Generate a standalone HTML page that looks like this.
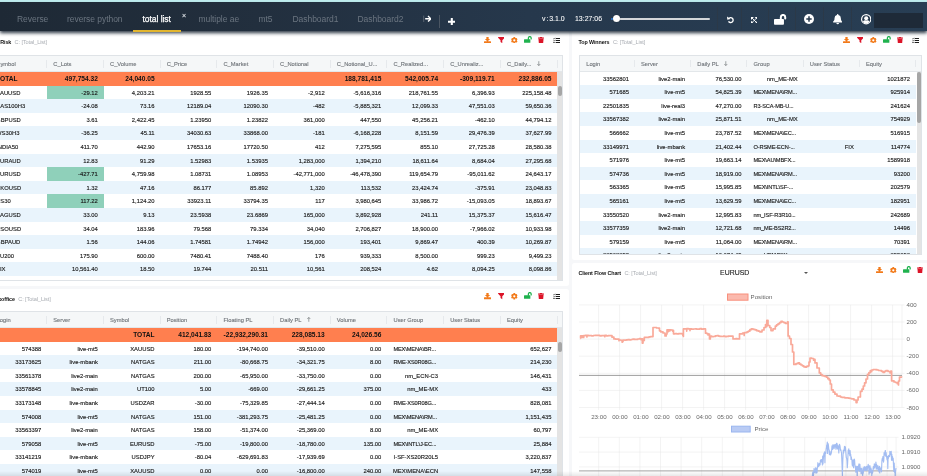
<!DOCTYPE html><html><head><meta charset="utf-8"><title>total list</title><style>
*{box-sizing:border-box}
html,body{margin:0;padding:0}
body{width:927px;height:476px;overflow:hidden;will-change:transform;background:#f6f7f9;font-family:"Liberation Sans",sans-serif;position:relative}
.topstrip{position:absolute;left:0;top:0;width:927px;height:1.55px;background:#bdebed}
.topdark{position:absolute;left:0;top:1.55px;width:927px;height:1.2px;background:#1c2734}
.nav{position:absolute;left:0;top:2px;width:927px;height:28.6px;background:linear-gradient(90deg,#1e2935 0%,#222f3e 28%,#26384c 57%,#283e54 100%);box-shadow:0 2.6px 3.4px rgba(30,42,56,.92);z-index:5}
.nav>*{position:absolute}
.tab{top:12px;font-size:8.5px;color:#6b7580;white-space:nowrap;line-height:10px;letter-spacing:-0.05px}
.tab.act{color:#fff;-webkit-text-stroke:0.25px #fff}
.uline{left:133px;top:27.8px;width:48px;height:2.2px;background:#e2b52e}
.tx{line-height:8px}
.nt{top:13.1px;font-size:6.95px;color:#fff;line-height:8px;white-space:nowrap;word-spacing:-1px;-webkit-text-stroke:0.06px #fff}
.panel{position:absolute;background:#fff;overflow:hidden;border-radius:2.5px}
.ttl{position:absolute;font-size:5.4px;line-height:7px;font-weight:bold;color:#111;white-space:nowrap;letter-spacing:-0.1px}
.ttl i{font-style:normal;font-weight:normal;color:#a9adb3;font-size:5.6px;margin-left:3.4px;letter-spacing:-0.1px}
.grid{position:absolute;border:1px solid #dfe3e7;background:#fff;overflow:hidden}
.hdr{position:absolute;top:0;height:15.7px;background:#f5f7f8;border-bottom:1px solid #e3e7ea}
.hc{position:absolute;top:0;height:15.7px;padding:0 5.8px 0 6.3px;font-size:5.75px;line-height:16.4px;color:#70757a;white-space:nowrap;-webkit-text-stroke:0.12px #70757a}
.hc:after{content:"";position:absolute;right:-0.3px;top:4px;height:7.6px;width:1px;background:#e6e9ec}
.arr{margin-left:5.6px;position:relative;top:-0.1px}
.row{position:absolute;height:13.6px;background:#fff}
.row.ev{background:#e9f4fc}
.row.tot{background:#ff7f4f;font-weight:bold}
.c{position:absolute;top:0;height:13.6px;padding:0 5.8px;font-size:5.85px;line-height:15.5px;color:#1a1a1a;text-align:right;white-space:nowrap;overflow:hidden;-webkit-text-stroke:0.14px #1a1a1a}
.tot .c{font-size:6.6px;color:#111;line-height:14.8px;-webkit-text-stroke:0}
.c.l{text-align:left}
.c.e{text-align:left;font-size:5.65px;letter-spacing:-0.12px;padding:0 0 0 6.2px}
.c.g{background:#8fd0ba}
.sb{position:absolute;background:#e4e4e4}
.sb b{position:absolute;left:0.8px;width:3.6px;border-radius:2px;background:#a6a6a6}
.ic{position:absolute;line-height:0}
.ic svg{display:block}
.botfade{position:absolute;left:0;top:471px;width:927px;height:5px;background:linear-gradient(rgba(0,0,0,0),rgba(0,0,0,.09));z-index:9}
</style></head><body>
<div class="topstrip"></div><div class="topdark"></div>
<div class="nav"><div class="tab" style="left:17.0px">Reverse</div>
<div class="tab" style="left:67.0px">reverse python</div>
<div class="tab act" style="left:142.5px">total list</div>
<div class="tab" style="left:198.5px">multiple ae</div>
<div class="tab" style="left:258.5px">mt5</div>
<div class="tab" style="left:292.5px">Dashboard1</div>
<div class="tab" style="left:357.5px">Dashboard2</div>
<div class="uline"></div>
<div class="tx" style="left:182px;top:9.5px;font-size:7px;font-weight:bold;color:#d8dde2">×</div>
<svg style="position:absolute;left:422.600px;top:13.300px" width="8.800" height="7.600" viewBox="0 0 8.800 7.600"><path d="M0.700 0.600v6.400" stroke="#6e7782" stroke-width="0.700" fill="none"/><path d="M2.200 3.800h5.400M5 1l2.900 2.800L5 6.600" stroke="#fff" stroke-width="1.350" fill="none" stroke-linejoin="round"/></svg>
<div style="position:absolute;left:439px;top:12.5px;width:0.6px;height:13px;background:#4b5663"></div>
<svg style="position:absolute;left:447.5px;top:15.7px" width="7.6" height="7.6" viewBox="0 0 8 8"><path d="M4 0.600v6.800M0.600 4h6.800" stroke="#fff" stroke-width="2.200" fill="none" stroke-linecap="round"/></svg>
<div class="nt" style="left:542px">v : 3.1.0</div>
<div class="nt" style="left:575px">13:27:06</div>
<div style="position:absolute;left:616px;top:15.85px;width:93.8px;height:2.2px;background:#d3d6d9;border-radius:1.1px"></div>
<div style="position:absolute;left:612.5px;top:13.45px;width:7px;height:7px;border-radius:50%;background:#fff;box-shadow:0 0 0.8px rgba(0,0,0,.5)"></div>
<div style="position:absolute;left:610.9px;top:15.85px;width:1.8px;height:2.2px;background:#2b7bd6;border-radius:1px"></div>
<div style="position:absolute;left:717px;top:5px;width:0.6px;height:23px;background:#2b3948"></div>
<div style="position:absolute;left:741px;top:5px;width:0.6px;height:23px;background:#2b3948"></div>
<div style="position:absolute;left:768px;top:5px;width:0.6px;height:23px;background:#2b3948"></div>
<div style="position:absolute;left:795px;top:5px;width:0.6px;height:23px;background:#2b3948"></div>
<div style="position:absolute;left:823px;top:5px;width:0.6px;height:23px;background:#2b3948"></div>
<div style="position:absolute;left:851px;top:5px;width:0.6px;height:23px;background:#2b3948"></div>
<svg style="position:absolute;left:726.5px;top:14px" width="7" height="7.5" viewBox="0 0 14 15"><path d="M3.2 5.2A5 5 0 1 1 3 10.8" fill="none" stroke="#fff" stroke-width="2.7"/><path d="M0 0.800l0.600 6.800 6.400-1.800z" fill="#fff"/></svg>
<svg style="position:absolute;left:750.8px;top:14.6px" width="6.6" height="6.6" viewBox="0 0 12 12"><path d="M2 2l8 8M10 2l-8 8" stroke="#fff" stroke-width="1.700"/><path d="M0 0h5.400L0 5.400zM12 0v5.400L6.600 0zM0 12V6.600L5.400 12zM12 12H6.600L12 6.600z" fill="#fff"/></svg>
<div style="position:absolute;left:774.1px;top:8.9px"><svg viewBox="0 0 18 15" width="12.8" height="10.7"><rect x="0" y="7" width="14" height="8" rx="1.200" fill="#fff"/><path d="M9.600 7.400V4.400a3.100 3.100 0 0 1 6.200 0V6.400" fill="none" stroke="#fff" stroke-width="2.800" stroke-linecap="round"/></svg></div>
<svg style="position:absolute;left:804px;top:12px" width="10" height="10" viewBox="0 0 20 20"><circle cx="10" cy="10" r="10" fill="#fff"/><path d="M10 4.6v10.8M4.6 10h10.8" stroke="#27394c" stroke-width="3"/></svg>
<svg style="position:absolute;left:832.6px;top:12px" width="9.4" height="10.6" viewBox="0 0 18 20"><path fill="#fff" d="M9 0a1.4 1.4 0 0 1 1.4 1.6A6 6 0 0 1 15 7.5c0 4.5 1.6 5.8 2.6 6.9a1 1 0 0 1-.8 1.7H1.200a1 1 0 0 1-.8-1.700C1.4 13.300 3 12 3 7.500A6 6 0 0 1 7.600 1.600 1.400 1.400 0 0 1 9 0zM6.500 17.200h5a2.500 2.500 0 0 1-5 0z"/></svg>
<svg style="position:absolute;left:861px;top:12.4px" width="10.4" height="10.4" viewBox="0 0 20 20"><circle cx="10" cy="10" r="10" fill="#fff"/><circle cx="10" cy="10" r="7.600" fill="#27394d"/><circle cx="10" cy="8" r="3.900" fill="#fff"/><path d="M3.6 14.500a7.400 7.400 0 0 0 12.800 0A6.500 6.500 0 0 0 10 12.300a6.500 6.500 0 0 0-6.400 2.200z" fill="#fff"/></svg>
<div style="position:absolute;left:874.2px;top:11px;width:48.6px;height:15.2px;background:#1e2a38"></div></div>
<div class="panel" style="left:-14px;top:31px;width:583px;height:255.4px">
<div class="ttl" style="left:14.2px;top:8px">Risk<i>C: [Total_List]</i></div>
<div class="ic" style="left:497.9px;top:6.1px"><svg viewBox="0 0 14 12.4" width="7" height="6.2"><path fill="#f27a1a" d="M4.700 0h4.600v4h3L7 8.900 1.700 4H4.700zM0.600 8.700h12.800a0.600 0.600 0 0 1 0.600 0.600v2.500a0.600 0.600 0 0 1-0.600 0.600H0.600a0.600 0.600 0 0 1-0.600-0.600V9.300a0.600 0.600 0 0 1 0.600-0.600z"/></svg></div><div class="ic" style="left:511.6px;top:6.1px"><svg viewBox="0 0 14 12.600" width="6.800" height="6.200"><path fill="#dc1428" d="M0.200 0h13.600v1.300L8.800 6.400V12.600L5.200 10.200V6.400L0.200 1.300z"/></svg></div><div class="ic" style="left:525.1px;top:5.8px"><svg viewBox="0 0 16 16" width="6.6" height="6.6"><g fill="#f27a1a"><circle cx="8" cy="8" r="6"/><rect x="5.800" y="0.200" width="4.400" height="15.600" rx="0.800"/><rect x="5.800" y="0.200" width="4.400" height="15.600" rx="0.800" transform="rotate(60 8 8)"/><rect x="5.800" y="0.200" width="4.400" height="15.600" rx="0.800" transform="rotate(120 8 8)"/></g><circle cx="8" cy="8" r="2.700" fill="#fff"/></svg></div><div class="ic" style="left:537.8px;top:5.2px"><svg viewBox="0 0 18 15" width="8.2" height="6.8"><rect x="0" y="7" width="14" height="8" rx="1.200" fill="#1fb24e"/><path d="M9.600 7.400V4.400a3.100 3.100 0 0 1 6.200 0V6.400" fill="none" stroke="#1fb24e" stroke-width="2.800" stroke-linecap="round"/></svg></div><div class="ic" style="left:552.3px;top:5.8px"><svg viewBox="0 0 14 15" width="6" height="6.4"><path fill="#dc1428" d="M4.600 0h4.800l0.800 1.200H14v2.200H0V1.200h3.800zM1 4.400h12l-0.900 9.400a1.300 1.300 0 0 1-1.300 1.200H3.200a1.300 1.300 0 0 1-1.300-1.200z"/></svg></div><div class="ic" style="left:566.8px;top:6.0px"><svg viewBox="0 0 7.4 6" width="7.4" height="6"><g fill="#1e1e1e"><rect x="2.600" y="0.950" width="4.800" height="1.100" rx="0.250"/><rect x="2.600" y="2.950" width="4.800" height="1.100" rx="0.250"/><rect x="2.600" y="4.950" width="4.800" height="1.100" rx="0.250"/><rect x="0.400" y="4.900" width="1.200" height="1.200"/></g><path d="M0.200 1.500l0.600 0.600L2 0.800M0.200 3.500l0.600 0.600L2 2.800" stroke="#1e1e1e" stroke-width="0.600" fill="none"/></svg></div>
<div class="grid" style="left:3.3px;top:24.4px;width:573.6px;height:225.4px">
<div class="hdr" style="left:0.0px;width:575.0px">
<div class="hc" style="left:0.0px;width:56.7px"><span>Symbol</span></div>
<div class="hc" style="left:56.7px;width:56.7px"><span>C_Lots</span></div>
<div class="hc" style="left:113.4px;width:56.7px"><span>C_Volume</span></div>
<div class="hc" style="left:170.1px;width:56.7px"><span>C_Price</span></div>
<div class="hc" style="left:226.8px;width:56.7px"><span>C_Market</span></div>
<div class="hc" style="left:283.5px;width:56.7px"><span>C_Notional</span></div>
<div class="hc" style="left:340.2px;width:56.7px"><span>C_Notional_U...</span></div>
<div class="hc" style="left:396.9px;width:56.7px"><span>C_Realized...</span></div>
<div class="hc" style="left:453.6px;width:56.7px"><span>C_Unrealiz...</span></div>
<div class="hc" style="left:510.3px;width:56.7px"><span>C_Daily...</span><svg class="arr" width="3.6" height="5" viewBox="0 0 3.6 5" role="img"><title>↓</title><path d="M1.800 0.200v4.300M0.300 3l1.500 1.600L3.300 3" stroke="#6d7276" stroke-width="0.650" fill="none"/></svg></div>
</div>
<div class="row tot" style="left:0.0px;top:15.7px;width:567.0px">
<div class="c l" style="left:0.0px;width:56.7px">TOTAL</div>
<div class="c" style="left:56.7px;width:56.7px">497,754.32</div>
<div class="c" style="left:113.4px;width:56.7px">24,040.05</div>
<div class="c" style="left:340.2px;width:56.7px">188,781,415</div>
<div class="c" style="left:396.9px;width:56.7px">542,005.74</div>
<div class="c" style="left:453.6px;width:56.7px">-309,119.71</div>
<div class="c" style="left:510.3px;width:56.7px">232,886.05</div>
</div>
<div class="row" style="left:0.0px;top:29.3px;width:567.0px">
<div class="c l" style="left:0.0px;width:56.7px">XAUUSD</div>
<div class="c g" style="left:56.7px;width:56.7px">-29.12</div>
<div class="c" style="left:113.4px;width:56.7px">4,203.21</div>
<div class="c" style="left:170.1px;width:56.7px">1928.55</div>
<div class="c" style="left:226.8px;width:56.7px">1926.35</div>
<div class="c" style="left:283.5px;width:56.7px">-2,912</div>
<div class="c" style="left:340.2px;width:56.7px">-5,616,316</div>
<div class="c" style="left:396.9px;width:56.7px">218,761.55</div>
<div class="c" style="left:453.6px;width:56.7px">6,396.93</div>
<div class="c" style="left:510.3px;width:56.7px">225,158.48</div>
</div>
<div class="row ev" style="left:0.0px;top:42.9px;width:567.0px">
<div class="c l" style="left:0.0px;width:56.7px">NAS100H3</div>
<div class="c" style="left:56.7px;width:56.7px">-24.08</div>
<div class="c" style="left:113.4px;width:56.7px">73.16</div>
<div class="c" style="left:170.1px;width:56.7px">12189.04</div>
<div class="c" style="left:226.8px;width:56.7px">12090.30</div>
<div class="c" style="left:283.5px;width:56.7px">-482</div>
<div class="c" style="left:340.2px;width:56.7px">-5,885,321</div>
<div class="c" style="left:396.9px;width:56.7px">12,099.33</div>
<div class="c" style="left:453.6px;width:56.7px">47,551.03</div>
<div class="c" style="left:510.3px;width:56.7px">59,650.36</div>
</div>
<div class="row" style="left:0.0px;top:56.5px;width:567.0px">
<div class="c l" style="left:0.0px;width:56.7px">GBPUSD</div>
<div class="c" style="left:56.7px;width:56.7px">3.61</div>
<div class="c" style="left:113.4px;width:56.7px">2,422.45</div>
<div class="c" style="left:170.1px;width:56.7px">1.23950</div>
<div class="c" style="left:226.8px;width:56.7px">1.23822</div>
<div class="c" style="left:283.5px;width:56.7px">361,000</div>
<div class="c" style="left:340.2px;width:56.7px">447,550</div>
<div class="c" style="left:396.9px;width:56.7px">45,256.21</div>
<div class="c" style="left:453.6px;width:56.7px">-462.10</div>
<div class="c" style="left:510.3px;width:56.7px">44,794.12</div>
</div>
<div class="row ev" style="left:0.0px;top:70.1px;width:567.0px">
<div class="c l" style="left:0.0px;width:56.7px">WS30H3</div>
<div class="c" style="left:56.7px;width:56.7px">-36.25</div>
<div class="c" style="left:113.4px;width:56.7px">45.11</div>
<div class="c" style="left:170.1px;width:56.7px">34030.63</div>
<div class="c" style="left:226.8px;width:56.7px">33868.00</div>
<div class="c" style="left:283.5px;width:56.7px">-181</div>
<div class="c" style="left:340.2px;width:56.7px">-6,168,228</div>
<div class="c" style="left:396.9px;width:56.7px">8,151.59</div>
<div class="c" style="left:453.6px;width:56.7px">29,476.39</div>
<div class="c" style="left:510.3px;width:56.7px">37,627.99</div>
</div>
<div class="row" style="left:0.0px;top:83.7px;width:567.0px">
<div class="c l" style="left:0.0px;width:56.7px">INDIA50</div>
<div class="c" style="left:56.7px;width:56.7px">411.70</div>
<div class="c" style="left:113.4px;width:56.7px">442.90</div>
<div class="c" style="left:170.1px;width:56.7px">17653.16</div>
<div class="c" style="left:226.8px;width:56.7px">17720.50</div>
<div class="c" style="left:283.5px;width:56.7px">412</div>
<div class="c" style="left:340.2px;width:56.7px">7,275,595</div>
<div class="c" style="left:396.9px;width:56.7px">855.10</div>
<div class="c" style="left:453.6px;width:56.7px">27,725.28</div>
<div class="c" style="left:510.3px;width:56.7px">28,580.38</div>
</div>
<div class="row ev" style="left:0.0px;top:97.3px;width:567.0px">
<div class="c l" style="left:0.0px;width:56.7px">EURAUD</div>
<div class="c" style="left:56.7px;width:56.7px">12.83</div>
<div class="c" style="left:113.4px;width:56.7px">91.29</div>
<div class="c" style="left:170.1px;width:56.7px">1.52983</div>
<div class="c" style="left:226.8px;width:56.7px">1.53935</div>
<div class="c" style="left:283.5px;width:56.7px">1,283,000</div>
<div class="c" style="left:340.2px;width:56.7px">1,394,210</div>
<div class="c" style="left:396.9px;width:56.7px">18,611.64</div>
<div class="c" style="left:453.6px;width:56.7px">8,684.04</div>
<div class="c" style="left:510.3px;width:56.7px">27,295.68</div>
</div>
<div class="row" style="left:0.0px;top:110.9px;width:567.0px">
<div class="c l" style="left:0.0px;width:56.7px">EURUSD</div>
<div class="c g" style="left:56.7px;width:56.7px">-427.71</div>
<div class="c" style="left:113.4px;width:56.7px">4,759.98</div>
<div class="c" style="left:170.1px;width:56.7px">1.08731</div>
<div class="c" style="left:226.8px;width:56.7px">1.08953</div>
<div class="c" style="left:283.5px;width:56.7px">-42,771,000</div>
<div class="c" style="left:340.2px;width:56.7px">-46,478,390</div>
<div class="c" style="left:396.9px;width:56.7px">119,654.79</div>
<div class="c" style="left:453.6px;width:56.7px">-95,011.62</div>
<div class="c" style="left:510.3px;width:56.7px">24,643.17</div>
</div>
<div class="row ev" style="left:0.0px;top:124.5px;width:567.0px">
<div class="c l" style="left:0.0px;width:56.7px">UKOUSD</div>
<div class="c" style="left:56.7px;width:56.7px">1.32</div>
<div class="c" style="left:113.4px;width:56.7px">47.16</div>
<div class="c" style="left:170.1px;width:56.7px">86.177</div>
<div class="c" style="left:226.8px;width:56.7px">85.892</div>
<div class="c" style="left:283.5px;width:56.7px">1,320</div>
<div class="c" style="left:340.2px;width:56.7px">113,532</div>
<div class="c" style="left:396.9px;width:56.7px">23,424.74</div>
<div class="c" style="left:453.6px;width:56.7px">-375.91</div>
<div class="c" style="left:510.3px;width:56.7px">23,048.83</div>
</div>
<div class="row" style="left:0.0px;top:138.1px;width:567.0px">
<div class="c l" style="left:0.0px;width:56.7px">US30</div>
<div class="c g" style="left:56.7px;width:56.7px">117.22</div>
<div class="c" style="left:113.4px;width:56.7px">1,124.20</div>
<div class="c" style="left:170.1px;width:56.7px">33923.11</div>
<div class="c" style="left:226.8px;width:56.7px">33794.35</div>
<div class="c" style="left:283.5px;width:56.7px">117</div>
<div class="c" style="left:340.2px;width:56.7px">3,980,645</div>
<div class="c" style="left:396.9px;width:56.7px">33,986.72</div>
<div class="c" style="left:453.6px;width:56.7px">-15,093.05</div>
<div class="c" style="left:510.3px;width:56.7px">18,893.67</div>
</div>
<div class="row ev" style="left:0.0px;top:151.7px;width:567.0px">
<div class="c l" style="left:0.0px;width:56.7px">XAGUSD</div>
<div class="c" style="left:56.7px;width:56.7px">33.00</div>
<div class="c" style="left:113.4px;width:56.7px">9.13</div>
<div class="c" style="left:170.1px;width:56.7px">23.5938</div>
<div class="c" style="left:226.8px;width:56.7px">23.6869</div>
<div class="c" style="left:283.5px;width:56.7px">165,000</div>
<div class="c" style="left:340.2px;width:56.7px">3,892,928</div>
<div class="c" style="left:396.9px;width:56.7px">241.11</div>
<div class="c" style="left:453.6px;width:56.7px">15,375.37</div>
<div class="c" style="left:510.3px;width:56.7px">15,616.47</div>
</div>
<div class="row" style="left:0.0px;top:165.3px;width:567.0px">
<div class="c l" style="left:0.0px;width:56.7px">USOUSD</div>
<div class="c" style="left:56.7px;width:56.7px">34.04</div>
<div class="c" style="left:113.4px;width:56.7px">183.96</div>
<div class="c" style="left:170.1px;width:56.7px">79.568</div>
<div class="c" style="left:226.8px;width:56.7px">79.334</div>
<div class="c" style="left:283.5px;width:56.7px">34,040</div>
<div class="c" style="left:340.2px;width:56.7px">2,706,827</div>
<div class="c" style="left:396.9px;width:56.7px">18,900.00</div>
<div class="c" style="left:453.6px;width:56.7px">-7,966.02</div>
<div class="c" style="left:510.3px;width:56.7px">10,933.98</div>
</div>
<div class="row ev" style="left:0.0px;top:178.9px;width:567.0px">
<div class="c l" style="left:0.0px;width:56.7px">GBPAUD</div>
<div class="c" style="left:56.7px;width:56.7px">1.56</div>
<div class="c" style="left:113.4px;width:56.7px">144.06</div>
<div class="c" style="left:170.1px;width:56.7px">1.74581</div>
<div class="c" style="left:226.8px;width:56.7px">1.74942</div>
<div class="c" style="left:283.5px;width:56.7px">156,000</div>
<div class="c" style="left:340.2px;width:56.7px">193,401</div>
<div class="c" style="left:396.9px;width:56.7px">9,869.47</div>
<div class="c" style="left:453.6px;width:56.7px">400.39</div>
<div class="c" style="left:510.3px;width:56.7px">10,269.87</div>
</div>
<div class="row" style="left:0.0px;top:192.5px;width:567.0px">
<div class="c l" style="left:0.0px;width:56.7px">AU200</div>
<div class="c" style="left:56.7px;width:56.7px">175.90</div>
<div class="c" style="left:113.4px;width:56.7px">600.00</div>
<div class="c" style="left:170.1px;width:56.7px">7480.41</div>
<div class="c" style="left:226.8px;width:56.7px">7488.40</div>
<div class="c" style="left:283.5px;width:56.7px">176</div>
<div class="c" style="left:340.2px;width:56.7px">939,333</div>
<div class="c" style="left:396.9px;width:56.7px">8,500.00</div>
<div class="c" style="left:453.6px;width:56.7px">999.23</div>
<div class="c" style="left:510.3px;width:56.7px">9,499.23</div>
</div>
<div class="row ev" style="left:0.0px;top:206.1px;width:567.0px">
<div class="c l" style="left:0.0px;width:56.7px">VIX</div>
<div class="c" style="left:56.7px;width:56.7px">10,561.40</div>
<div class="c" style="left:113.4px;width:56.7px">18.50</div>
<div class="c" style="left:170.1px;width:56.7px">19.744</div>
<div class="c" style="left:226.8px;width:56.7px">20.511</div>
<div class="c" style="left:283.5px;width:56.7px">10,561</div>
<div class="c" style="left:340.2px;width:56.7px">208,524</div>
<div class="c" style="left:396.9px;width:56.7px">4.62</div>
<div class="c" style="left:453.6px;width:56.7px">8,094.25</div>
<div class="c" style="left:510.3px;width:56.7px">8,098.86</div>
</div>
<div class="sb" style="left:567.2px;top:15.7px;width:5.2px;height:210px"><b style="top:14.2px;height:9.6px;left:0.4px;width:4.4px"></b></div>
</div></div>
<div class="panel" style="left:-14px;top:289.4px;width:583px;height:190px">
<div class="ttl" style="left:2.6px;top:6.3px">Backoffice<i>C: [Total_List]</i></div>
<div class="ic" style="left:497.9px;top:4.0px"><svg viewBox="0 0 14 12.4" width="7" height="6.2"><path fill="#f27a1a" d="M4.700 0h4.600v4h3L7 8.900 1.700 4H4.700zM0.600 8.700h12.800a0.600 0.600 0 0 1 0.600 0.600v2.500a0.600 0.600 0 0 1-0.600 0.600H0.600a0.600 0.600 0 0 1-0.600-0.600V9.300a0.600 0.600 0 0 1 0.600-0.600z"/></svg></div><div class="ic" style="left:511.6px;top:4.0px"><svg viewBox="0 0 14 12.600" width="6.800" height="6.200"><path fill="#dc1428" d="M0.200 0h13.600v1.300L8.800 6.400V12.600L5.200 10.200V6.400L0.200 1.300z"/></svg></div><div class="ic" style="left:525.1px;top:3.7px"><svg viewBox="0 0 16 16" width="6.6" height="6.6"><g fill="#f27a1a"><circle cx="8" cy="8" r="6"/><rect x="5.800" y="0.200" width="4.400" height="15.600" rx="0.800"/><rect x="5.800" y="0.200" width="4.400" height="15.600" rx="0.800" transform="rotate(60 8 8)"/><rect x="5.800" y="0.200" width="4.400" height="15.600" rx="0.800" transform="rotate(120 8 8)"/></g><circle cx="8" cy="8" r="2.700" fill="#fff"/></svg></div><div class="ic" style="left:537.8px;top:3.1px"><svg viewBox="0 0 18 15" width="8.2" height="6.8"><rect x="0" y="7" width="14" height="8" rx="1.200" fill="#1fb24e"/><path d="M9.600 7.400V4.400a3.100 3.100 0 0 1 6.200 0V6.400" fill="none" stroke="#1fb24e" stroke-width="2.800" stroke-linecap="round"/></svg></div><div class="ic" style="left:552.3px;top:3.7px"><svg viewBox="0 0 14 15" width="6" height="6.4"><path fill="#dc1428" d="M4.600 0h4.800l0.800 1.200H14v2.200H0V1.200h3.800zM1 4.400h12l-0.900 9.400a1.300 1.300 0 0 1-1.300 1.200H3.200a1.300 1.300 0 0 1-1.300-1.200z"/></svg></div><div class="ic" style="left:566.8px;top:3.9px"><svg viewBox="0 0 7.4 6" width="7.4" height="6"><g fill="#1e1e1e"><rect x="2.600" y="0.950" width="4.800" height="1.100" rx="0.250"/><rect x="2.600" y="2.950" width="4.800" height="1.100" rx="0.250"/><rect x="2.600" y="4.950" width="4.800" height="1.100" rx="0.250"/><rect x="0.400" y="4.900" width="1.200" height="1.200"/></g><path d="M0.200 1.500l0.600 0.600L2 0.800M0.200 3.500l0.600 0.600L2 2.800" stroke="#1e1e1e" stroke-width="0.600" fill="none"/></svg></div>
<div class="grid" style="left:3.3px;top:22.0px;width:573.6px;height:200px">
<div class="hdr" style="left:0.0px;width:575.0px">
<div class="hc" style="left:0.0px;width:56.7px"><span>Login</span></div>
<div class="hc" style="left:56.7px;width:56.7px"><span>Server</span></div>
<div class="hc" style="left:113.4px;width:56.7px"><span>Symbol</span></div>
<div class="hc" style="left:170.1px;width:56.7px"><span>Position</span></div>
<div class="hc" style="left:226.8px;width:56.7px"><span>Floating PL</span></div>
<div class="hc" style="left:283.5px;width:56.7px"><span>Daily PL</span><svg class="arr" width="3.6" height="5" viewBox="0 0 3.6 5" role="img"><title>↑</title><path d="M1.800 4.800V0.500M0.300 2l1.500-1.600L3.300 2" stroke="#6d7276" stroke-width="0.650" fill="none"/></svg></div>
<div class="hc" style="left:340.2px;width:56.7px"><span>Volume</span></div>
<div class="hc" style="left:396.9px;width:56.7px"><span>User Group</span></div>
<div class="hc" style="left:453.6px;width:56.7px"><span>User Status</span></div>
<div class="hc" style="left:510.3px;width:56.7px"><span>Equity</span></div>
</div>
<div class="row tot" style="left:0.0px;top:15.7px;width:567.0px">
<div class="c" style="left:113.4px;width:56.7px">TOTAL</div>
<div class="c" style="left:170.1px;width:56.7px">412,041.83</div>
<div class="c" style="left:226.8px;width:56.7px">-22,932,290.31</div>
<div class="c" style="left:283.5px;width:56.7px">228,085.13</div>
<div class="c" style="left:340.2px;width:56.7px">24,026.56</div>
</div>
<div class="row" style="left:0.0px;top:29.3px;width:567.0px">
<div class="c" style="left:0.0px;width:56.7px">574388</div>
<div class="c" style="left:56.7px;width:56.7px">live-mt5</div>
<div class="c" style="left:113.4px;width:56.7px">XAUUSD</div>
<div class="c" style="left:170.1px;width:56.7px">180.00</div>
<div class="c" style="left:226.8px;width:56.7px">-194,740.00</div>
<div class="c" style="left:283.5px;width:56.7px">-39,510.00</div>
<div class="c" style="left:340.2px;width:56.7px">0.00</div>
<div class="c e" style="left:396.9px;width:56.7px">MEX\MENA\BR...</div>
<div class="c" style="left:510.3px;width:56.7px">652,627</div>
</div>
<div class="row ev" style="left:0.0px;top:42.9px;width:567.0px">
<div class="c" style="left:0.0px;width:56.7px">33173625</div>
<div class="c" style="left:56.7px;width:56.7px">live-mbank</div>
<div class="c" style="left:113.4px;width:56.7px">NATGAS</div>
<div class="c" style="left:170.1px;width:56.7px">211.00</div>
<div class="c" style="left:226.8px;width:56.7px">-80,668.75</div>
<div class="c" style="left:283.5px;width:56.7px">-34,321.75</div>
<div class="c" style="left:340.2px;width:56.7px">8.00</div>
<div class="c e" style="left:396.9px;width:56.7px">RME-XS0R08G...</div>
<div class="c" style="left:510.3px;width:56.7px">214,230</div>
</div>
<div class="row" style="left:0.0px;top:56.5px;width:567.0px">
<div class="c" style="left:0.0px;width:56.7px">33561378</div>
<div class="c" style="left:56.7px;width:56.7px">live2-main</div>
<div class="c" style="left:113.4px;width:56.7px">NATGAS</div>
<div class="c" style="left:170.1px;width:56.7px">200.00</div>
<div class="c" style="left:226.8px;width:56.7px">-65,950.00</div>
<div class="c" style="left:283.5px;width:56.7px">-33,750.00</div>
<div class="c" style="left:340.2px;width:56.7px">0.00</div>
<div class="c" style="left:396.9px;width:56.7px">nm_ECN-C3</div>
<div class="c" style="left:510.3px;width:56.7px">146,431</div>
</div>
<div class="row ev" style="left:0.0px;top:70.1px;width:567.0px">
<div class="c" style="left:0.0px;width:56.7px">33578845</div>
<div class="c" style="left:56.7px;width:56.7px">live2-main</div>
<div class="c" style="left:113.4px;width:56.7px">UT100</div>
<div class="c" style="left:170.1px;width:56.7px">5.00</div>
<div class="c" style="left:226.8px;width:56.7px">-669.00</div>
<div class="c" style="left:283.5px;width:56.7px">-29,661.25</div>
<div class="c" style="left:340.2px;width:56.7px">375.00</div>
<div class="c" style="left:396.9px;width:56.7px">nm_ME-MX</div>
<div class="c" style="left:510.3px;width:56.7px">433</div>
</div>
<div class="row" style="left:0.0px;top:83.7px;width:567.0px">
<div class="c" style="left:0.0px;width:56.7px">33173148</div>
<div class="c" style="left:56.7px;width:56.7px">live-mbank</div>
<div class="c" style="left:113.4px;width:56.7px">USDZAR</div>
<div class="c" style="left:170.1px;width:56.7px">-30.00</div>
<div class="c" style="left:226.8px;width:56.7px">-75,329.85</div>
<div class="c" style="left:283.5px;width:56.7px">-27,444.14</div>
<div class="c" style="left:340.2px;width:56.7px">0.00</div>
<div class="c e" style="left:396.9px;width:56.7px">RME-XS0R08G...</div>
<div class="c" style="left:510.3px;width:56.7px">828,081</div>
</div>
<div class="row ev" style="left:0.0px;top:97.3px;width:567.0px">
<div class="c" style="left:0.0px;width:56.7px">574008</div>
<div class="c" style="left:56.7px;width:56.7px">live-mt5</div>
<div class="c" style="left:113.4px;width:56.7px">NATGAS</div>
<div class="c" style="left:170.1px;width:56.7px">151.00</div>
<div class="c" style="left:226.8px;width:56.7px">-381,293.75</div>
<div class="c" style="left:283.5px;width:56.7px">-25,481.25</div>
<div class="c" style="left:340.2px;width:56.7px">0.00</div>
<div class="c e" style="left:396.9px;width:56.7px">MEX\MENA\RM...</div>
<div class="c" style="left:510.3px;width:56.7px">1,151,435</div>
</div>
<div class="row" style="left:0.0px;top:110.9px;width:567.0px">
<div class="c" style="left:0.0px;width:56.7px">33563397</div>
<div class="c" style="left:56.7px;width:56.7px">live2-main</div>
<div class="c" style="left:113.4px;width:56.7px">NATGAS</div>
<div class="c" style="left:170.1px;width:56.7px">158.00</div>
<div class="c" style="left:226.8px;width:56.7px">-51,374.00</div>
<div class="c" style="left:283.5px;width:56.7px">-25,369.00</div>
<div class="c" style="left:340.2px;width:56.7px">8.00</div>
<div class="c" style="left:396.9px;width:56.7px">nm_ME-MX</div>
<div class="c" style="left:510.3px;width:56.7px">60,797</div>
</div>
<div class="row ev" style="left:0.0px;top:124.5px;width:567.0px">
<div class="c" style="left:0.0px;width:56.7px">579058</div>
<div class="c" style="left:56.7px;width:56.7px">live-mt5</div>
<div class="c" style="left:113.4px;width:56.7px">EURUSD</div>
<div class="c" style="left:170.1px;width:56.7px">-75.00</div>
<div class="c" style="left:226.8px;width:56.7px">-19,800.00</div>
<div class="c" style="left:283.5px;width:56.7px">-18,780.00</div>
<div class="c" style="left:340.2px;width:56.7px">135.00</div>
<div class="c e" style="left:396.9px;width:56.7px">MEX\INTL\J-EC...</div>
<div class="c" style="left:510.3px;width:56.7px">25,884</div>
</div>
<div class="row" style="left:0.0px;top:138.1px;width:567.0px">
<div class="c" style="left:0.0px;width:56.7px">33141219</div>
<div class="c" style="left:56.7px;width:56.7px">live-mbank</div>
<div class="c" style="left:113.4px;width:56.7px">USDJPY</div>
<div class="c" style="left:170.1px;width:56.7px">-80.04</div>
<div class="c" style="left:226.8px;width:56.7px">-629,691.83</div>
<div class="c" style="left:283.5px;width:56.7px">-17,939.69</div>
<div class="c" style="left:340.2px;width:56.7px">0.00</div>
<div class="c" style="left:396.9px;width:56.7px">I-SF-XS20R20L5</div>
<div class="c" style="left:510.3px;width:56.7px">3,220,837</div>
</div>
<div class="row ev" style="left:0.0px;top:151.7px;width:567.0px">
<div class="c" style="left:0.0px;width:56.7px">574019</div>
<div class="c" style="left:56.7px;width:56.7px">live-mt5</div>
<div class="c" style="left:113.4px;width:56.7px">XAUUSD</div>
<div class="c" style="left:170.1px;width:56.7px">0.00</div>
<div class="c" style="left:226.8px;width:56.7px">0.00</div>
<div class="c" style="left:283.5px;width:56.7px">-16,800.00</div>
<div class="c" style="left:340.2px;width:56.7px">240.00</div>
<div class="c" style="left:396.9px;width:56.7px">MEX\MENA\ECN</div>
<div class="c" style="left:510.3px;width:56.7px">147,558</div>
</div>
<div class="sb" style="left:567.2px;top:15.7px;width:5.2px;height:210px"><b style="top:14.2px;height:9.6px;left:0.4px;width:4.4px"></b></div>
</div></div>
<div class="panel" style="left:572px;top:31px;width:360px;height:229.2px">
<div class="ttl" style="left:6.4px;top:8px">Top Winners<i>C: [Total_List]</i></div>
<div class="ic" style="left:270.8px;top:6.1px"><svg viewBox="0 0 14 12.4" width="7" height="6.2"><path fill="#f27a1a" d="M4.700 0h4.600v4h3L7 8.900 1.700 4H4.700zM0.600 8.700h12.800a0.600 0.600 0 0 1 0.600 0.600v2.500a0.600 0.600 0 0 1-0.600 0.600H0.600a0.600 0.600 0 0 1-0.600-0.600V9.300a0.600 0.600 0 0 1 0.600-0.600z"/></svg></div><div class="ic" style="left:284.5px;top:6.1px"><svg viewBox="0 0 14 12.600" width="6.800" height="6.200"><path fill="#dc1428" d="M0.200 0h13.600v1.300L8.800 6.400V12.600L5.200 10.200V6.400L0.200 1.300z"/></svg></div><div class="ic" style="left:298.0px;top:5.8px"><svg viewBox="0 0 16 16" width="6.6" height="6.6"><g fill="#f27a1a"><circle cx="8" cy="8" r="6"/><rect x="5.800" y="0.200" width="4.400" height="15.600" rx="0.800"/><rect x="5.800" y="0.200" width="4.400" height="15.600" rx="0.800" transform="rotate(60 8 8)"/><rect x="5.800" y="0.200" width="4.400" height="15.600" rx="0.800" transform="rotate(120 8 8)"/></g><circle cx="8" cy="8" r="2.700" fill="#fff"/></svg></div><div class="ic" style="left:310.7px;top:5.2px"><svg viewBox="0 0 18 15" width="8.2" height="6.8"><rect x="0" y="7" width="14" height="8" rx="1.200" fill="#1fb24e"/><path d="M9.600 7.400V4.400a3.100 3.100 0 0 1 6.200 0V6.400" fill="none" stroke="#1fb24e" stroke-width="2.800" stroke-linecap="round"/></svg></div><div class="ic" style="left:325.2px;top:5.8px"><svg viewBox="0 0 14 15" width="6" height="6.4"><path fill="#dc1428" d="M4.600 0h4.800l0.800 1.200H14v2.200H0V1.200h3.800zM1 4.400h12l-0.900 9.400a1.300 1.300 0 0 1-1.300 1.200H3.200a1.300 1.300 0 0 1-1.300-1.200z"/></svg></div><div class="ic" style="left:339.7px;top:6.0px"><svg viewBox="0 0 7.4 6" width="7.4" height="6"><g fill="#1e1e1e"><rect x="2.600" y="0.950" width="4.800" height="1.100" rx="0.250"/><rect x="2.600" y="2.950" width="4.800" height="1.100" rx="0.250"/><rect x="2.600" y="4.950" width="4.800" height="1.100" rx="0.250"/><rect x="0.400" y="4.900" width="1.200" height="1.200"/></g><path d="M0.200 1.500l0.600 0.600L2 0.800M0.200 3.500l0.600 0.600L2 2.800" stroke="#1e1e1e" stroke-width="0.600" fill="none"/></svg></div>
<div class="grid" style="left:6.9px;top:23.9px;width:343.6px;height:200.6px">
<div class="hdr" style="left:-1.4px;width:345.5px">
<div class="hc" style="left:0.0px;width:56.2px;padding-left:7.7px"><span>Login</span></div>
<div class="hc" style="left:56.2px;width:56.2px"><span>Server</span></div>
<div class="hc" style="left:112.5px;width:56.2px"><span>Daily PL</span><svg class="arr" width="3.6" height="5" viewBox="0 0 3.6 5" role="img"><title>↓</title><path d="M1.800 0.200v4.300M0.300 3l1.500 1.600L3.300 3" stroke="#6d7276" stroke-width="0.650" fill="none"/></svg></div>
<div class="hc" style="left:168.8px;width:56.2px"><span>Group</span></div>
<div class="hc" style="left:225.0px;width:56.2px"><span>User Status</span></div>
<div class="hc" style="left:281.2px;width:56.2px"><span>Equity</span></div>
</div>
<div class="row" style="left:-1.4px;top:15.7px;width:337.5px">
<div class="c" style="left:0.0px;width:56.2px">33562801</div>
<div class="c" style="left:56.2px;width:56.2px">live2-main</div>
<div class="c" style="left:112.5px;width:56.2px">76,530.00</div>
<div class="c" style="left:168.8px;width:56.2px">nm_ME-MX</div>
<div class="c" style="left:281.2px;width:56.2px">1021872</div>
</div>
<div class="row ev" style="left:-1.4px;top:29.3px;width:337.5px">
<div class="c" style="left:0.0px;width:56.2px">571685</div>
<div class="c" style="left:56.2px;width:56.2px">live-mt5</div>
<div class="c" style="left:112.5px;width:56.2px">54,825.39</div>
<div class="c e" style="left:168.8px;width:56.2px">MEX\MENA\RM...</div>
<div class="c" style="left:281.2px;width:56.2px">925914</div>
</div>
<div class="row" style="left:-1.4px;top:42.9px;width:337.5px">
<div class="c" style="left:0.0px;width:56.2px">22501835</div>
<div class="c" style="left:56.2px;width:56.2px">live-real3</div>
<div class="c" style="left:112.5px;width:56.2px">47,270.00</div>
<div class="c e" style="left:168.8px;width:56.2px">R3-SCA-MB-U...</div>
<div class="c" style="left:281.2px;width:56.2px">241624</div>
</div>
<div class="row ev" style="left:-1.4px;top:56.5px;width:337.5px">
<div class="c" style="left:0.0px;width:56.2px">33567382</div>
<div class="c" style="left:56.2px;width:56.2px">live2-main</div>
<div class="c" style="left:112.5px;width:56.2px">25,871.51</div>
<div class="c" style="left:168.8px;width:56.2px">nm_ME-MX</div>
<div class="c" style="left:281.2px;width:56.2px">754929</div>
</div>
<div class="row" style="left:-1.4px;top:70.1px;width:337.5px">
<div class="c" style="left:0.0px;width:56.2px">566662</div>
<div class="c" style="left:56.2px;width:56.2px">live-mt5</div>
<div class="c" style="left:112.5px;width:56.2px">23,787.52</div>
<div class="c e" style="left:168.8px;width:56.2px">MEX\MENA\EC...</div>
<div class="c" style="left:281.2px;width:56.2px">516915</div>
</div>
<div class="row ev" style="left:-1.4px;top:83.7px;width:337.5px">
<div class="c" style="left:0.0px;width:56.2px">33149971</div>
<div class="c" style="left:56.2px;width:56.2px">live-mbank</div>
<div class="c" style="left:112.5px;width:56.2px">21,402.44</div>
<div class="c e" style="left:168.8px;width:56.2px">O-RSME-ECN-...</div>
<div class="c" style="left:225.0px;width:56.2px">FIX</div>
<div class="c" style="left:281.2px;width:56.2px">114774</div>
</div>
<div class="row" style="left:-1.4px;top:97.3px;width:337.5px">
<div class="c" style="left:0.0px;width:56.2px">571976</div>
<div class="c" style="left:56.2px;width:56.2px">live-mt5</div>
<div class="c" style="left:112.5px;width:56.2px">19,663.14</div>
<div class="c e" style="left:168.8px;width:56.2px">MEX\AU\MBFX...</div>
<div class="c" style="left:281.2px;width:56.2px">1589918</div>
</div>
<div class="row ev" style="left:-1.4px;top:110.9px;width:337.5px">
<div class="c" style="left:0.0px;width:56.2px">574736</div>
<div class="c" style="left:56.2px;width:56.2px">live-mt5</div>
<div class="c" style="left:112.5px;width:56.2px">18,919.00</div>
<div class="c e" style="left:168.8px;width:56.2px">MEX\MENA\RM...</div>
<div class="c" style="left:281.2px;width:56.2px">93200</div>
</div>
<div class="row" style="left:-1.4px;top:124.5px;width:337.5px">
<div class="c" style="left:0.0px;width:56.2px">563365</div>
<div class="c" style="left:56.2px;width:56.2px">live-mt5</div>
<div class="c" style="left:112.5px;width:56.2px">15,995.85</div>
<div class="c e" style="left:168.8px;width:56.2px">MEX\INTL\SF-...</div>
<div class="c" style="left:281.2px;width:56.2px">202579</div>
</div>
<div class="row ev" style="left:-1.4px;top:138.1px;width:337.5px">
<div class="c" style="left:0.0px;width:56.2px">565161</div>
<div class="c" style="left:56.2px;width:56.2px">live-mt5</div>
<div class="c" style="left:112.5px;width:56.2px">13,629.59</div>
<div class="c e" style="left:168.8px;width:56.2px">MEX\MENA\EC...</div>
<div class="c" style="left:281.2px;width:56.2px">182951</div>
</div>
<div class="row" style="left:-1.4px;top:151.7px;width:337.5px">
<div class="c" style="left:0.0px;width:56.2px">33550520</div>
<div class="c" style="left:56.2px;width:56.2px">live2-main</div>
<div class="c" style="left:112.5px;width:56.2px">12,995.83</div>
<div class="c e" style="left:168.8px;width:56.2px">nm_ISF-R3R10...</div>
<div class="c" style="left:281.2px;width:56.2px">242689</div>
</div>
<div class="row ev" style="left:-1.4px;top:165.3px;width:337.5px">
<div class="c" style="left:0.0px;width:56.2px">33577359</div>
<div class="c" style="left:56.2px;width:56.2px">live2-main</div>
<div class="c" style="left:112.5px;width:56.2px">12,721.68</div>
<div class="c e" style="left:168.8px;width:56.2px">nm_ME-BS2R2...</div>
<div class="c" style="left:281.2px;width:56.2px">14496</div>
</div>
<div class="row" style="left:-1.4px;top:178.9px;width:337.5px">
<div class="c" style="left:0.0px;width:56.2px">579159</div>
<div class="c" style="left:56.2px;width:56.2px">live-mt5</div>
<div class="c" style="left:112.5px;width:56.2px">11,064.00</div>
<div class="c e" style="left:168.8px;width:56.2px">MEX\MENA\RM...</div>
<div class="c" style="left:281.2px;width:56.2px">70391</div>
</div>
<div class="row ev" style="left:-1.4px;top:192.5px;width:337.5px">
<div class="c" style="left:0.0px;width:56.2px">33568352</div>
<div class="c" style="left:56.2px;width:56.2px">live2-main</div>
<div class="c" style="left:112.5px;width:56.2px">10,674.45</div>
<div class="c e" style="left:168.8px;width:56.2px">nm_VEN\FSX...</div>
<div class="c" style="left:281.2px;width:56.2px">895093</div>
</div>
<div class="sb" style="left:337px;top:15.7px;width:4.6px;height:190px"><b style="top:0.5px;height:50.5px;left:0.2px;width:4.2px"></b></div>
</div></div>
<div class="panel" style="left:572px;top:262.7px;width:360px;height:220px">
<div class="ttl" style="left:6.4px;top:7.4px">Client Flow Chart<i>C: [Total_List]</i></div>
<div style="position:absolute;left:148px;top:5.7px;font-size:6.95px;line-height:9px;color:#222;-webkit-text-stroke:0.12px #222">EURUSD</div>
<div style="position:absolute;left:232px;top:9.3px;width:0;height:0;border-left:2.4px solid transparent;border-right:2.4px solid transparent;border-top:2.6px solid #555"></div>
<div class="ic" style="left:304.3px;top:4.4px"><svg viewBox="0 0 14 12.4" width="7" height="6.2"><path fill="#f27a1a" d="M4.700 0h4.600v4h3L7 8.900 1.700 4H4.700zM0.600 8.700h12.800a0.600 0.600 0 0 1 0.600 0.600v2.500a0.600 0.600 0 0 1-0.600 0.600H0.600a0.600 0.600 0 0 1-0.600-0.600V9.300a0.600 0.600 0 0 1 0.600-0.600z"/></svg></div><div class="ic" style="left:318.2px;top:4.1px"><svg viewBox="0 0 16 16" width="6.6" height="6.6"><g fill="#f27a1a"><circle cx="8" cy="8" r="6"/><rect x="5.800" y="0.200" width="4.400" height="15.600" rx="0.800"/><rect x="5.800" y="0.200" width="4.400" height="15.600" rx="0.800" transform="rotate(60 8 8)"/><rect x="5.800" y="0.200" width="4.400" height="15.600" rx="0.800" transform="rotate(120 8 8)"/></g><circle cx="8" cy="8" r="2.700" fill="#fff"/></svg></div><div class="ic" style="left:330.9px;top:3.5px"><svg viewBox="0 0 18 15" width="8.2" height="6.8"><rect x="0" y="7" width="14" height="8" rx="1.200" fill="#1fb24e"/><path d="M9.600 7.400V4.400a3.100 3.100 0 0 1 6.200 0V6.400" fill="none" stroke="#1fb24e" stroke-width="2.800" stroke-linecap="round"/></svg></div><div class="ic" style="left:345.3px;top:4.1px"><svg viewBox="0 0 14 15" width="6" height="6.4"><path fill="#dc1428" d="M4.600 0h4.800l0.800 1.200H14v2.200H0V1.200h3.800zM1 4.400h12l-0.900 9.400a1.300 1.300 0 0 1-1.300 1.200H3.200a1.300 1.300 0 0 1-1.300-1.200z"/></svg></div>
</div>
<svg class="chart" width="927" height="476" viewBox="0 0 927 476" style="position:absolute;left:0;top:0">
<g stroke="#e6e6e6" stroke-width="0.5">
<line x1="598.6" y1="304.9" x2="598.6" y2="409.9"/>
<line x1="619.6" y1="304.9" x2="619.6" y2="409.9"/>
<line x1="640.6" y1="304.9" x2="640.6" y2="409.9"/>
<line x1="661.6" y1="304.9" x2="661.6" y2="409.9"/>
<line x1="682.6" y1="304.9" x2="682.6" y2="409.9"/>
<line x1="703.6" y1="304.9" x2="703.6" y2="409.9"/>
<line x1="724.6" y1="304.9" x2="724.6" y2="409.9"/>
<line x1="745.6" y1="304.9" x2="745.6" y2="409.9"/>
<line x1="766.6" y1="304.9" x2="766.6" y2="409.9"/>
<line x1="787.6" y1="304.9" x2="787.6" y2="409.9"/>
<line x1="808.6" y1="304.9" x2="808.6" y2="409.9"/>
<line x1="829.6" y1="304.9" x2="829.6" y2="409.9"/>
<line x1="850.6" y1="304.9" x2="850.6" y2="409.9"/>
<line x1="871.6" y1="304.9" x2="871.6" y2="409.9"/>
<line x1="892.6" y1="304.9" x2="892.6" y2="409.9"/>
<line x1="579" y1="304.9" x2="904.5" y2="304.9"/>
<line x1="579" y1="322.0" x2="904.5" y2="322.0"/>
<line x1="579" y1="339.1" x2="904.5" y2="339.1"/>
<line x1="579" y1="356.2" x2="904.5" y2="356.2"/>
<line x1="579" y1="373.3" x2="904.5" y2="373.3"/>
<line x1="579" y1="390.4" x2="904.5" y2="390.4"/>
<line x1="579" y1="407.5" x2="904.5" y2="407.5"/>
<line x1="902" y1="304.9" x2="902" y2="407.5"/>
<line x1="598.7" y1="437.3" x2="598.7" y2="476"/>
<line x1="619.3" y1="437.3" x2="619.3" y2="476"/>
<line x1="639.9" y1="437.3" x2="639.9" y2="476"/>
<line x1="660.5" y1="437.3" x2="660.5" y2="476"/>
<line x1="681.1" y1="437.3" x2="681.1" y2="476"/>
<line x1="701.7" y1="437.3" x2="701.7" y2="476"/>
<line x1="722.3" y1="437.3" x2="722.3" y2="476"/>
<line x1="742.9" y1="437.3" x2="742.9" y2="476"/>
<line x1="763.5" y1="437.3" x2="763.5" y2="476"/>
<line x1="784.1" y1="437.3" x2="784.1" y2="476"/>
<line x1="804.7" y1="437.3" x2="804.7" y2="476"/>
<line x1="825.3" y1="437.3" x2="825.3" y2="476"/>
<line x1="845.9" y1="437.3" x2="845.9" y2="476"/>
<line x1="866.5" y1="437.3" x2="866.5" y2="476"/>
<line x1="887.1" y1="437.3" x2="887.1" y2="476"/>
<line x1="579" y1="437.3" x2="898.5" y2="437.3"/>
<line x1="579" y1="452.1" x2="898.5" y2="452.1"/>
<line x1="579" y1="466.9" x2="898.5" y2="466.9"/>
<line x1="896.1" y1="437.3" x2="896.1" y2="476"/>
</g>
<line x1="579" y1="375.4" x2="902" y2="375.4" stroke="#858585" stroke-width="0.8"/>
<line x1="579" y1="470.9" x2="896.1" y2="470.9" stroke="#999" stroke-width="0.9"/>
<polyline fill="none" stroke="#f9a999" stroke-width="1.7" stroke-linejoin="round" points="580.2,338.3 580.6,338.3 580.6,335.8 582.2,335.8 582.2,337.5 582.2,335.8 582.2,335.8 583.7,335.8 583.7,337.5 583.7,335.8 583.7,335.6 585.3,335.6 585.3,335.4 586.9,335.4 586.9,336.9 586.9,335.4 586.9,335.3 588.4,335.3 588.4,335.7 590.0,335.7 590.0,335.5 591.6,335.5 591.6,335.8 593.3,335.8 593.3,335.5 594.9,335.5 594.9,335.3 596.6,335.3 596.6,335.4 598.2,335.4 598.2,335.4 599.9,335.4 599.9,335.8 601.5,335.8 601.5,335.7 603.1,335.7 603.1,335.6 604.8,335.6 604.8,336.7 604.8,335.6 604.8,335.4 606.4,335.4 606.4,335.8 608.1,335.8 608.1,335.6 609.7,335.6 609.7,335.7 612.0,335.7 612.0,337.2 613.9,337.2 613.9,338.9 615.5,338.9 615.5,339.1 617.0,339.1 617.0,339.2 619.0,339.2 619.0,340.7 619.0,339.2 619.0,340.0 621.0,340.0 621.0,340.3 622.2,340.3 622.2,342.2 622.2,340.3 622.2,341.6 623.0,341.6 623.0,340.0 624.6,340.0 624.6,340.1 626.3,340.1 626.3,339.9 627.9,339.9 627.9,339.7 629.5,339.7 629.5,339.8 631.1,339.8 631.1,339.5 632.8,339.5 632.8,339.1 634.4,339.1 634.4,339.4 636.0,339.4 636.0,339.4 637.6,339.4 637.6,339.0 639.3,339.0 639.3,338.7 640.9,338.7 640.9,339.6 640.9,338.7 640.9,338.9 642.3,338.9 642.3,343.1 643.0,343.1 643.0,339.0 644.3,339.0 644.3,340.5 644.3,339.0 644.3,337.4 645.9,337.4 645.9,337.3 647.5,337.3 647.5,337.3 649.0,337.3 649.0,336.8 650.6,336.8 650.6,336.7 652.2,336.7 652.2,336.6 653.0,336.6 653.0,327.5 654.8,327.5 654.8,327.5 656.6,327.5 656.6,328.0 658.4,328.0 658.4,328.1 659.5,328.1 659.5,330.8 660.7,330.8 660.7,331.8 663.0,331.8 663.0,333.0 665.0,333.0 665.0,335.2 665.0,333.0 665.0,336.0 666.2,336.0 666.2,334.0 667.0,334.0 667.0,329.8 668.4,329.8 668.4,331.6 668.4,329.8 668.4,329.9 669.8,329.9 669.8,331.0 669.8,329.9 669.8,329.8 671.2,329.8 671.2,330.0 672.6,330.0 672.6,331.1 672.6,330.0 672.6,330.4 673.5,330.4 673.5,333.8 675.2,333.8 675.2,333.5 676.9,333.5 676.9,333.9 678.6,333.9 678.6,333.7 680.3,333.7 680.3,333.7 682.0,333.7 682.0,333.8 682.8,333.8 682.8,335.2 683.4,335.2 683.4,336.5 683.4,335.2 683.4,328.9 685.0,328.9 685.0,328.8 686.7,328.8 686.7,331.1 686.7,328.8 686.7,328.7 688.4,328.7 688.4,328.9 690.0,328.9 690.0,330.6 690.0,328.9 690.0,328.9 691.6,328.9 691.6,329.2 693.3,329.2 693.3,329.0 695.0,329.0 695.0,328.8 696.6,328.8 696.6,329.1 698.2,329.1 698.2,329.1 699.9,329.1 699.9,328.7 701.6,328.7 701.6,329.2 703.2,329.2 703.2,328.9 705.5,328.9 705.5,333.2 706.8,333.2 706.8,333.6 708.0,333.6 708.0,334.9 708.0,333.6 708.0,334.0 709.5,334.0 709.5,338.9 710.3,338.9 710.3,336.0 711.7,336.0 711.7,336.6 713.5,336.6 713.5,336.5 715.2,336.5 715.2,335.8 717.0,335.8 717.0,335.6 718.5,335.6 718.5,336.1 720.0,336.1 720.0,336.4 721.7,336.4 721.7,336.5 723.3,336.5 723.3,336.1 725.0,336.1 725.0,336.6 726.6,336.6 726.6,336.4 728.3,336.4 728.3,336.1 729.9,336.1 729.9,336.1 731.6,336.1 731.6,336.2 733.0,336.2 733.0,338.9 734.4,338.9 734.4,339.0 735.8,339.0 735.8,338.7 737.2,338.7 737.2,338.9 739.5,338.9 739.5,333.8 741.0,333.8 741.0,333.8 742.6,333.8 742.6,333.1 744.2,333.1 744.2,335.5 744.2,333.1 744.2,332.7 745.7,332.7 745.7,332.6 747.0,332.6 747.0,331.8 748.4,331.8 748.4,331.1 749.9,331.1 749.9,329.7 751.3,329.7 751.3,328.9 753.1,328.9 753.1,329.4 755.0,329.4 755.0,329.8 756.6,329.8 756.6,330.7 758.2,330.7 758.2,331.1 759.8,331.1 759.8,331.8 762.0,331.8 762.0,330.0 764.0,330.0 764.0,327.5 765.5,327.5 765.5,324.5 766.8,324.5 766.8,326.6 766.8,324.5 766.8,320.4 768.0,320.4 768.0,325.5 769.7,325.5 769.7,327.5 771.0,327.5 771.0,330.6 773.0,330.6 773.0,328.9 775.3,328.9 775.3,326.1 776.6,326.1 776.6,324.8 778.0,324.8 778.0,323.8 779.5,323.8 779.5,322.6 781.0,322.6 781.0,321.3 782.4,321.3 782.4,322.0 783.9,322.0 783.9,322.6 785.3,322.6 785.3,323.3 787.5,323.3 787.5,321.8 788.1,321.8 788.1,336.0 789.5,336.0 789.5,338.5 791.0,338.5 791.0,344.5 792.5,344.5 792.5,352.0 793.8,352.0 793.8,364.4 796.0,364.4 796.0,363.6 798.0,363.6 798.0,362.9 799.5,362.9 799.5,364.1 801.0,364.1 801.0,365.0 802.4,365.0 802.4,365.8 803.7,365.8 803.7,366.7 805.1,366.7 805.1,367.2 806.5,367.2 806.5,366.4 808.0,366.4 808.0,365.8 809.0,365.8 809.0,362.0 810.0,362.0 810.0,358.1 811.8,358.1 811.8,358.5 813.6,358.5 813.6,360.2 813.6,358.5 813.6,359.3 815.0,359.3 815.0,360.6 815.0,359.3 815.0,362.9 817.0,362.9 817.0,368.0 819.3,368.0 819.3,372.9 820.7,372.9 820.7,374.5 822.1,374.5 822.1,375.7 823.5,375.7 823.5,375.9 825.0,375.9 825.0,376.5 826.4,376.5 826.4,377.1 827.8,377.1 827.8,378.7 829.2,378.7 829.2,380.0 830.3,380.0 830.3,384.0 831.5,384.0 831.5,385.9 831.5,384.0 831.5,389.9 833.2,389.9 833.2,392.2 833.2,389.9 833.2,392.0 834.9,392.0 834.9,394.1 837.0,394.1 837.0,396.0 838.8,396.0 838.8,396.2 840.5,396.2 840.5,397.0 841.9,397.0 841.9,397.3 843.4,397.3 843.4,397.4 844.8,397.4 844.8,397.8 846.6,397.8 846.6,397.8 848.3,397.8 848.3,398.1 850.1,398.1 850.1,398.5 851.9,398.5 851.9,398.9 854.0,398.9 854.0,400.0 856.1,400.0 856.1,401.2 856.1,400.0 856.1,402.6 857.0,402.6 857.0,400.0 858.1,400.0 858.1,397.0 860.4,397.0 860.4,391.3 862.0,391.3 862.0,389.2 863.3,389.2 863.3,386.0 864.6,386.0 864.6,382.8 866.0,382.8 866.0,379.0 867.5,379.0 867.5,374.3 868.9,374.3 868.9,372.6 870.3,372.6 870.3,370.6 871.7,370.6 871.7,371.6 871.7,370.6 871.7,370.0 873.1,370.0 873.1,369.5 875.0,369.5 875.0,369.6 877.0,369.6 877.0,370.0 878.6,370.0 878.6,370.5 880.2,370.5 880.2,370.6 881.6,370.6 881.6,371.3 883.0,371.3 883.0,372.3 884.5,372.3 884.5,371.3 885.9,371.3 885.9,370.6 888.0,370.6 888.0,371.5 890.1,371.5 890.1,372.9 890.8,372.9 890.8,371.0 891.6,371.0 891.6,380.8 894.0,380.8 894.0,382.0 895.6,382.0 895.6,382.5 897.2,382.5 897.2,383.6 898.5,383.6 898.5,384.9 898.5,383.6 898.5,381.0 899.5,381.0 899.5,377.1 901.5,377.1 901.5,376.3"/>
<polyline fill="none" stroke="#a3bdf2" stroke-width="1.15" stroke-linejoin="round" points="811.9,479.1 812.2,479.5 812.5,474.3 812.9,471.9 813.2,480.1 813.5,474.8 813.8,473.2 814.1,468.4 814.5,470.6 814.8,472.3 815.1,470.2 815.4,470.4 815.7,467.7 816.0,473.1 816.3,468.3 816.6,468.4 817.0,472.6 817.3,468.4 817.6,466.5 817.9,462.7 818.2,465.5 818.5,466.7 818.8,466.3 819.1,464.0 819.5,463.4 819.8,465.1 820.1,464.7 820.4,460.4 820.8,460.3 821.1,459.6 821.4,462.0 821.7,461.4 822.0,459.6 822.4,464.9 822.7,456.1 823.0,463.9 823.3,459.2 823.6,455.9 823.9,453.5 824.3,452.9 824.6,451.8 824.9,462.7 825.2,452.7 825.5,453.1 825.8,453.5 826.1,449.6 826.4,448.2 826.7,445.0 827.0,445.2 827.3,442.0 827.6,453.4 827.9,445.0 828.2,443.7 828.5,446.1 828.8,449.2 829.1,449.8 829.4,454.6 829.7,452.2 830.0,451.2 830.4,455.0 830.7,455.0 831.0,453.3 831.3,453.3 831.7,450.0 832.0,445.8 832.3,448.3 832.7,449.4 833.0,444.7 833.4,444.9 833.7,446.2 834.1,448.7 834.4,444.9 834.7,445.1 835.0,446.9 835.3,444.4 835.7,446.4 836.0,449.3 836.3,447.3 836.6,443.4 836.9,443.3 837.2,444.5 837.5,449.0 837.8,445.5 838.2,446.3 838.5,446.9 838.8,452.9 839.1,446.9 839.4,444.4 839.8,445.0 840.1,446.9 840.5,450.2 840.8,449.7 841.2,451.4 841.5,452.4 842.0,464.1 842.4,475.6 842.8,460.8 843.3,450.2 843.6,453.1 843.9,450.9 844.2,449.5 844.5,446.4 844.8,447.8 845.1,450.7 845.4,446.9 845.7,450.5 846.0,454.1 846.3,457.5 846.7,458.6 847.0,460.8 847.3,467.7 847.6,463.7 847.9,457.2 848.2,450.2 848.5,453.6 848.8,448.8 849.2,453.6 849.5,450.7 849.8,455.6 850.1,450.5 850.4,454.6 850.7,454.3 851.0,459.5 851.3,456.9 851.6,459.0 851.9,459.7 852.2,464.9 852.5,466.0 852.9,460.2 853.2,461.5 853.6,467.8 853.9,459.5 854.3,459.1 854.6,460.2 854.9,465.0 855.3,467.0 855.6,470.0 855.9,472.3 856.2,466.2 856.6,467.1 856.9,467.9 857.2,479.0 857.6,466.3 857.9,470.1 858.3,470.1 858.6,465.8 859.0,463.9 859.3,471.3 859.6,468.6 859.9,464.3 860.2,471.0 860.5,470.6 860.8,468.4 861.1,473.7 861.4,469.5 861.7,470.7 862.0,468.0 862.4,474.1 862.7,475.5 863.0,470.1 863.3,473.1 863.7,467.6 864.0,469.0 864.3,466.6 864.7,470.4 865.0,470.5 865.4,467.2 865.7,467.3 866.1,470.4 866.4,466.4 866.7,467.8 867.0,470.3 867.3,469.7 867.6,466.1 867.9,467.4 868.2,464.3 868.5,467.3 868.8,468.6 869.1,474.1 869.4,465.9 869.7,466.7 870.0,465.8 870.3,472.6 870.6,469.1 870.9,468.1 871.2,469.2 871.5,471.1 871.8,475.5 872.1,470.7 872.5,473.2 872.8,472.0 873.1,468.3 873.4,466.5 873.7,466.9 874.0,469.0 874.3,463.9 874.6,467.4 875.0,466.8 875.3,464.3 875.6,466.9 875.9,462.1 876.2,469.3 876.5,464.0 876.8,467.4 877.1,465.8 877.4,469.0 877.7,468.5 878.0,465.7 878.3,470.8 878.6,468.3 878.9,467.4 879.2,471.9 879.5,466.3 879.8,472.9 880.1,468.5 880.4,468.6 880.7,469.3 881.1,467.4 881.5,471.8 881.9,461.1 882.2,458.6 882.5,460.4 882.9,456.6 883.2,460.7 883.5,462.1 883.8,460.2 884.1,452.7 884.4,454.3 884.8,455.1 885.1,450.9 885.4,450.5 885.7,456.2 886.1,452.6 886.4,455.3 886.8,458.1 887.1,460.0 887.5,456.3 887.8,468.5 888.1,456.7 888.4,458.5 888.7,455.4 889.0,456.1 889.3,455.3 889.6,456.7 889.9,451.4 890.2,452.1 890.5,454.6 890.9,453.1 891.2,451.3 891.5,460.2 891.8,454.0 892.2,460.3 892.5,456.5 892.8,459.5 893.2,458.4 893.5,465.3 893.9,471.5 894.2,463.0 894.6,472.2 894.9,470.0 895.2,476.7 895.5,471.1 896.0,468.0"/>
<rect x="727.5" y="294" width="20.5" height="6.2" fill="#fbb9ad" stroke="#f88f7d" stroke-width="1"/>
<rect x="731.5" y="426.2" width="18.7" height="5.8" fill="#b9cbf4" stroke="#9ab5ef" stroke-width="1"/>
<g font-family="Liberation Sans, sans-serif" font-size="6.15" fill="#666">
<text x="750.6" y="299.3">Position</text>
<text x="754.4" y="431.3">Price</text>
<text x="598.9" y="418.6" text-anchor="middle">23:00</text>
<text x="619.9" y="418.6" text-anchor="middle">00:00</text>
<text x="640.9" y="418.6" text-anchor="middle">01:00</text>
<text x="661.9" y="418.6" text-anchor="middle">02:00</text>
<text x="682.9" y="418.6" text-anchor="middle">03:00</text>
<text x="703.9" y="418.6" text-anchor="middle">04:00</text>
<text x="724.9" y="418.6" text-anchor="middle">05:00</text>
<text x="745.9" y="418.6" text-anchor="middle">06:00</text>
<text x="766.9" y="418.6" text-anchor="middle">07:00</text>
<text x="787.9" y="418.6" text-anchor="middle">08:00</text>
<text x="808.9" y="418.6" text-anchor="middle">09:00</text>
<text x="829.9" y="418.6" text-anchor="middle">10:00</text>
<text x="850.9" y="418.6" text-anchor="middle">11:00</text>
<text x="871.9" y="418.6" text-anchor="middle">12:00</text>
<text x="892.9" y="418.6" text-anchor="middle">13:00</text>
<text x="906.5" y="306.9">400</text>
<text x="906.5" y="324.0">200</text>
<text x="906.5" y="341.1">0</text>
<text x="906.5" y="358.2">-200</text>
<text x="906.5" y="375.3">-400</text>
<text x="906.5" y="392.4">-600</text>
<text x="906.5" y="409.5">-800</text>
<text x="901.6" y="439.4">1.0920</text>
<text x="901.6" y="454.2">1.0910</text>
<text x="901.6" y="469.0">1.0900</text>
</g></svg>
<div class="botfade"></div>
</body></html>
